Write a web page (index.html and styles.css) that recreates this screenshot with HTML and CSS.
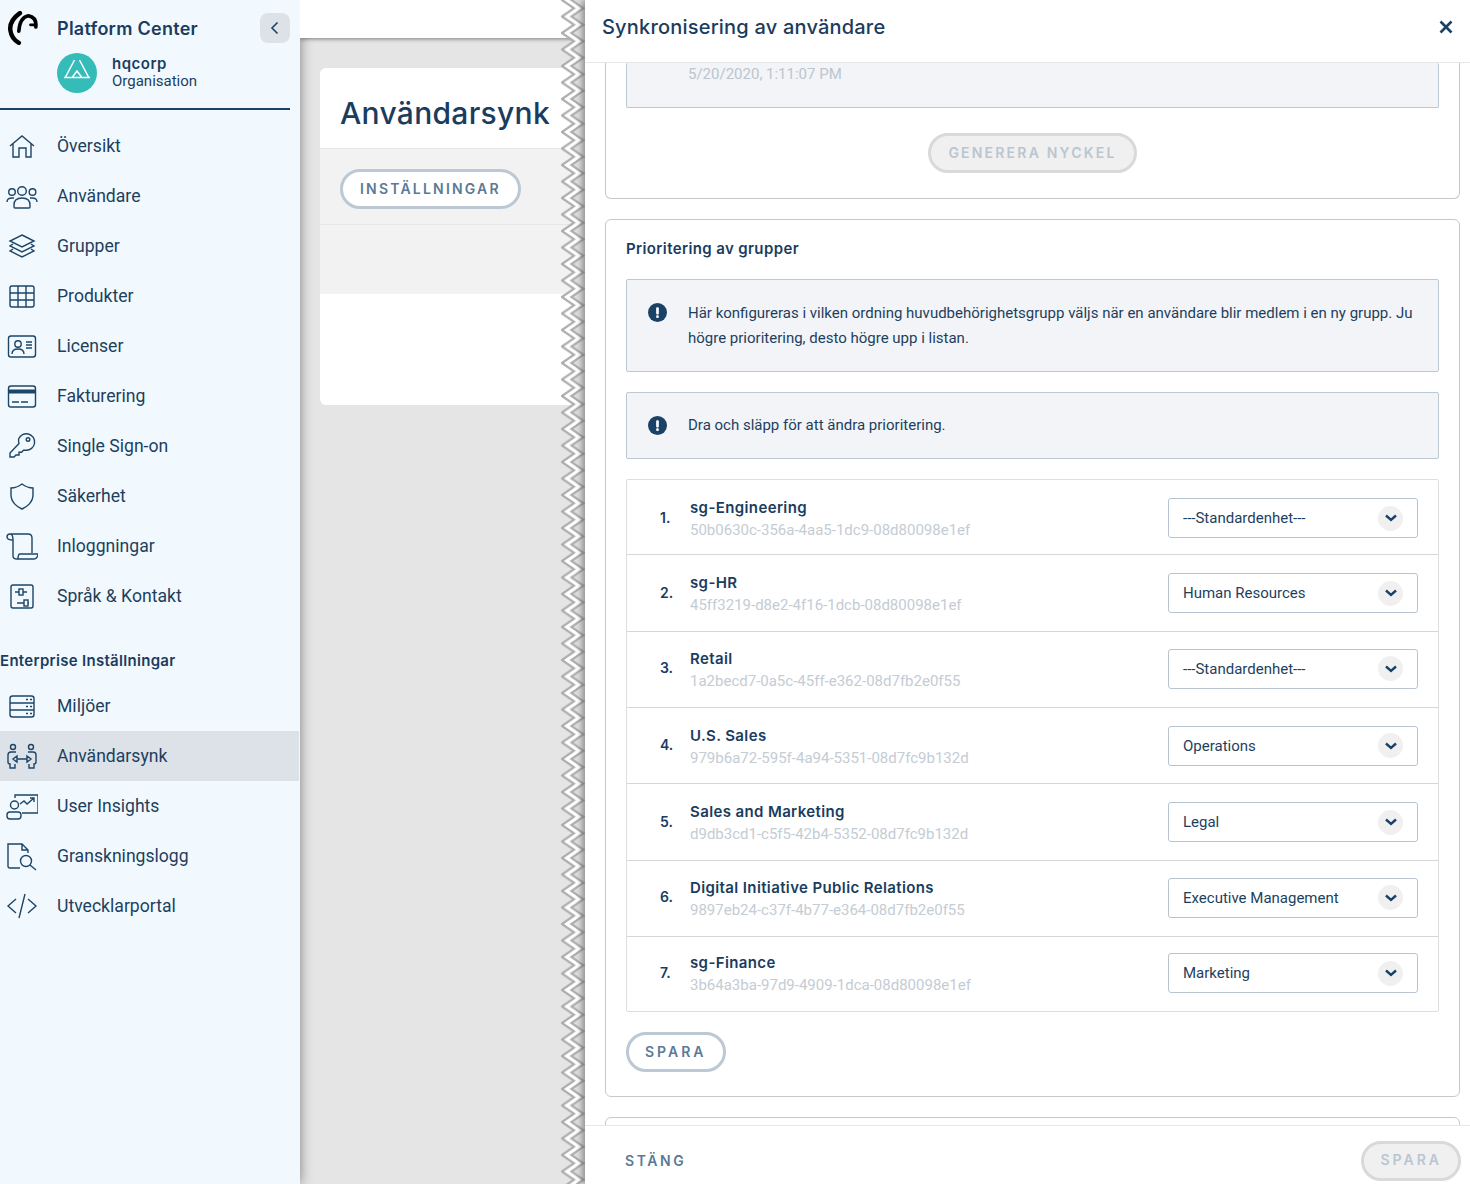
FILE: index.html
```html
<!DOCTYPE html>
<html lang="sv">
<head>
    <meta charset="UTF-8">
    <meta name="viewport" content="width=device-width, initial-scale=1.0">
    <title>Användarsynk</title>
    <link rel="stylesheet" href="styles.css">
</head>
<body>
    <!-- Sidebar -->
    <aside class="sidebar">
        <div class="brand">
            <svg class="logo" viewBox="0 0 30 32" fill="none" stroke="#000" stroke-linecap="round">
                <path d="M13 2 Q3 9 4 18 Q5 26 12 30" stroke-width="4.2"/>
                <path d="M12 19 Q13 6 21 4.5 Q29 6 28 15" stroke-width="3.4"/>
                <path d="M23 13 H28" stroke-width="2.6"/>
            </svg>
            <span class="brand-name">Platform Center</span>
            <button class="collapse">
                <svg viewBox="0 0 30 30" fill="none" stroke="#1d4567" stroke-width="1.6"><path d="M17.5 9.5 L12 15 L17.5 20.5"/></svg>
            </button>
        </div>
        <div class="org">
            <span class="avatar">
                <svg viewBox="0 0 40 40" fill="none" stroke="#fff" stroke-width="1.5">
                    <path d="M17.5 7 L8.5 24 M22.5 7 L31.5 24 M7 24.5 H33 M15.5 24 L20 18 L24.5 24"/>
                </svg>
            </span>
            <div class="org-text">
                <strong>hqcorp</strong>
                <span>Organisation</span>
            </div>
        </div>

        <nav class="nav">
            <a class="nav-item">
                <svg class="nav-icon" viewBox="0 0 32 32"><path d="M4 16 L16 6 L28 16 M7 14 V27 H13 V18 H20 V27 H25 V14"/></svg>
                Översikt
            </a>
            <a class="nav-item">
                <svg class="nav-icon" viewBox="0 0 32 32"><circle cx="6" cy="12" r="3.3"/><circle cx="16" cy="11" r="4.3"/><circle cx="26.5" cy="12" r="3.3"/><path d="M1 22 C1 19 3 18 6 18 H8 M31 22 C31 19 29 18 26 18 H24 M8 27 V25 C8 20 11 18 16 18 C21 18 24 20 24 25 V27 Q24 28 23 28 H9 Q8 28 8 27Z"/></svg>
                Användare
            </a>
            <a class="nav-item">
                <svg class="nav-icon" viewBox="0 0 32 32"><path d="M16 5 L28 11 L16 17 L4 11Z M7 14 L4 16 L16 22 L28 16 L25 14 M7 19 L4 21 L16 27 L28 21 L25 19"/></svg>
                Grupper
            </a>
            <a class="nav-item">
                <svg class="nav-icon" viewBox="0 0 32 32"><rect x="4" y="6" width="24" height="21" rx="2"/><path d="M12 6 V27 M20 6 V27 M4 13 H28 M4 20 H28"/></svg>
                Produkter
            </a>
            <a class="nav-item">
                <svg class="nav-icon" viewBox="0 0 32 32"><rect x="2.5" y="6" width="27" height="21" rx="2.5"/><circle cx="12" cy="14" r="3.2"/><path d="M6 24 C6 20 9 19 12 19 C15 19 18 20 18 24 M20 12 H26 M20 15 H26 M20 18 H26"/></svg>
                Licenser
            </a>
            <a class="nav-item">
                <svg class="nav-icon" viewBox="0 0 32 32"><rect x="2.5" y="6" width="27" height="21" rx="2.5"/><path class="thick" d="M2.5 11.5 H29.5"/><path d="M6 22 H13 M15 22 H22"/></svg>
                Fakturering
            </a>
            <a class="nav-item">
                <svg class="nav-icon" viewBox="0 0 32 32"><path d="M12.6 9 A8.3 8.3 0 1 1 20 20.3 L17.5 20.3 L15.5 22.3 H13 V25 H10 L8 27 H4 V23 L13 13.5 Q12.3 11 12.6 9Z"/><circle cx="22" cy="9.5" r="1.8"/></svg>
                Single Sign-on
            </a>
            <a class="nav-item">
                <svg class="nav-icon" viewBox="0 0 32 32"><path d="M16 4 C20 7 24 8 27 8 V15 C27 22 21 27 16 29 C11 27 5 22 5 15 V8 C8 8 12 7 16 4Z"/></svg>
                Säkerhet
            </a>
            <a class="nav-item">
                <svg class="nav-icon" viewBox="0 0 32 32"><path d="M4 4 H22 Q26 4 26 8 V23 M4 4 Q1 4 1 7 Q1 10 7 10 V26 Q7 29 11 29 H28 Q31 29 32 25 V24 H14 Q12 24 12 29 M4 4 Q7 4 7 10"/></svg>
                Inloggningar
            </a>
            <a class="nav-item">
                <svg class="nav-icon" viewBox="0 0 32 32"><rect x="5" y="5" width="22" height="23" rx="2"/><path d="M9 12 H13 M17 12 H21 M11 23 H18 M22 23 H23"/><rect x="13" y="9" width="4" height="6"/><rect x="18" y="20" width="4" height="6"/></svg>
                Språk &amp; Kontakt
            </a>
        </nav>

        <h3 class="nav-title">Enterprise Inställningar</h3>

        <nav class="nav">
            <a class="nav-item">
                <svg class="nav-icon" viewBox="0 0 32 32"><rect x="4" y="6" width="24" height="21" rx="2.5"/><path d="M4 13 H28 M4 20 H28 M20 9.5 H22 M24 9.5 H26 M20 16.5 H22 M24 16.5 H26 M20 23.5 H22 M24 23.5 H26"/></svg>
                Miljöer
            </a>
            <a class="nav-item active">
                <svg class="nav-icon" viewBox="0 0 32 32"><circle cx="7" cy="7" r="2.5"/><circle cx="25" cy="7" r="2.5"/><path d="M10 12 H5 Q2 12 2 15 V22 Q2 24 4 24 V28 H9 V24 M22 12 H27 Q30 12 30 15 V22 Q30 24 28 24 V28 H23 V24 M11 19 H21 M11 16 L7 19 L11 22Z M21 16 L25 19 L21 22Z"/></svg>
                Användarsynk
            </a>
            <a class="nav-item">
                <svg class="nav-icon" viewBox="0 0 32 32"><path d="M9 8 V5 H32 V23 H16 M14 14 L18 11 L21 14 L28 8 M24 8 H28 V12"/><circle cx="8.5" cy="15" r="4"/><rect x="1" y="22" width="14" height="7" rx="3"/></svg>
                User Insights
            </a>
            <a class="nav-item">
                <svg class="nav-icon" viewBox="0 0 32 32"><path d="M14 28 H4 Q2 28 2 26 V4 H16 L22 10 V13 M16 4 V10 H22"/><circle cx="20" cy="21" r="5.5"/><path d="M24 25 L30 30"/></svg>
                Granskningslogg
            </a>
            <a class="nav-item">
                <svg class="nav-icon" viewBox="0 0 32 32"><path d="M10 9 L2 16 L10 23 M22 9 L30 16 L22 23 M19 4 L13 28"/></svg>
                Utvecklarportal
            </a>
        </nav>
    </aside>

    <!-- Page behind the panel -->
    <main class="main">
        <div class="topbar"></div>
        <section class="page-card">
            <div class="page-head"><h1>Användarsynk</h1></div>
            <div class="page-tabs"><button class="btn">INSTÄLLNINGAR</button></div>
            <div class="page-gray"></div>
        </section>
        <svg class="zigzag" width="24" height="1184">
            <defs>
                <pattern id="zig" width="24" height="16.5" patternUnits="userSpaceOnUse">
                    <path d="M24 0 H10.5 L22.5 8.25 L10.5 16.5 H24Z" fill="#dedede"/>
                    <path d="M1 0 L13 8.25 L1 16.5 H10.5 L22.5 8.25 L10.5 0Z" fill="#fff"/>
                    <path d="M13 -8.25 L1 0 L13 8.25 L1 16.5 L13 24.75 M22.5 -8.25 L10.5 0 L22.5 8.25 L10.5 16.5 L22.5 24.75" fill="none" stroke="#aeaeae" stroke-width="2.2"/>
                </pattern>
            </defs>
            <rect width="24" height="1184" fill="url(#zig)"/>
        </svg>
    </main>

    <!-- Slide-in panel -->
    <section class="panel">
        <header class="panel-head">
            <h2>Synkronisering av användare</h2>
            <svg class="close" viewBox="0 0 14 14" fill="none" stroke="#1a4166" stroke-width="2.6"><path d="M1.5 1.5 L12.5 12.5 M12.5 1.5 L1.5 12.5"/></svg>
        </header>

        <div class="panel-body">
            <div class="card card-cut">
                <div class="alert alert-cut"><p class="faded">5/20/2020, 1:11:07 PM</p></div>
                <div class="center"><button class="btn btn-off">GENERERA NYCKEL</button></div>
            </div>

            <div class="card card-groups">
                <h3 class="card-title">Prioritering av grupper</h3>
                <div class="alert alert-top">
                    <svg class="info" viewBox="0 0 20 20"><circle cx="10" cy="10" r="10" fill="#1a4166"/><rect x="8.6" y="4.5" width="2.8" height="7.5" rx="1" fill="#fff"/><rect x="8.6" y="13" width="2.8" height="2.8" rx="1" fill="#fff"/></svg>
                    <p>Här konfigureras i vilken ordning huvudbehörighetsgrupp väljs när en användare blir medlem i en ny grupp. Ju högre prioritering, desto högre upp i listan.</p>
                </div>
                <div class="alert alert-mid">
                    <svg class="info" viewBox="0 0 20 20"><circle cx="10" cy="10" r="10" fill="#1a4166"/><rect x="8.6" y="4.5" width="2.8" height="7.5" rx="1" fill="#fff"/><rect x="8.6" y="13" width="2.8" height="2.8" rx="1" fill="#fff"/></svg>
                    <p>Dra och släpp för att ändra prioritering.</p>
                </div>

                <ol class="groups">
                    <li class="group">
                        <span class="num">1.</span>
                        <div class="group-text"><strong>sg-Engineering</strong><span>50b0630c-356a-4aa5-1dc9-08d80098e1ef</span></div>
                        <div class="select">---Standardenhet---<i class="chev"><svg viewBox="0 0 12 8" fill="none" stroke="#1a4166" stroke-width="2.4"><path d="M1 1.5 L6 6 L11 1.5"/></svg></i></div>
                    </li>
                    <li class="group">
                        <span class="num">2.</span>
                        <div class="group-text"><strong>sg-HR</strong><span>45ff3219-d8e2-4f16-1dcb-08d80098e1ef</span></div>
                        <div class="select">Human Resources<i class="chev"><svg viewBox="0 0 12 8" fill="none" stroke="#1a4166" stroke-width="2.4"><path d="M1 1.5 L6 6 L11 1.5"/></svg></i></div>
                    </li>
                    <li class="group">
                        <span class="num">3.</span>
                        <div class="group-text"><strong>Retail</strong><span>1a2becd7-0a5c-45ff-e362-08d7fb2e0f55</span></div>
                        <div class="select">---Standardenhet---<i class="chev"><svg viewBox="0 0 12 8" fill="none" stroke="#1a4166" stroke-width="2.4"><path d="M1 1.5 L6 6 L11 1.5"/></svg></i></div>
                    </li>
                    <li class="group">
                        <span class="num">4.</span>
                        <div class="group-text"><strong>U.S. Sales</strong><span>979b6a72-595f-4a94-5351-08d7fc9b132d</span></div>
                        <div class="select">Operations<i class="chev"><svg viewBox="0 0 12 8" fill="none" stroke="#1a4166" stroke-width="2.4"><path d="M1 1.5 L6 6 L11 1.5"/></svg></i></div>
                    </li>
                    <li class="group">
                        <span class="num">5.</span>
                        <div class="group-text"><strong>Sales and Marketing</strong><span>d9db3cd1-c5f5-42b4-5352-08d7fc9b132d</span></div>
                        <div class="select">Legal<i class="chev"><svg viewBox="0 0 12 8" fill="none" stroke="#1a4166" stroke-width="2.4"><path d="M1 1.5 L6 6 L11 1.5"/></svg></i></div>
                    </li>
                    <li class="group">
                        <span class="num">6.</span>
                        <div class="group-text"><strong>Digital Initiative Public Relations</strong><span>9897eb24-c37f-4b77-e364-08d7fb2e0f55</span></div>
                        <div class="select">Executive Management<i class="chev"><svg viewBox="0 0 12 8" fill="none" stroke="#1a4166" stroke-width="2.4"><path d="M1 1.5 L6 6 L11 1.5"/></svg></i></div>
                    </li>
                    <li class="group">
                        <span class="num">7.</span>
                        <div class="group-text"><strong>sg-Finance</strong><span>3b64a3ba-97d9-4909-1dca-08d80098e1ef</span></div>
                        <div class="select">Marketing<i class="chev"><svg viewBox="0 0 12 8" fill="none" stroke="#1a4166" stroke-width="2.4"><path d="M1 1.5 L6 6 L11 1.5"/></svg></i></div>
                    </li>
                </ol>

                <button class="btn btn-short btn-save">SPARA</button>
            </div>

            <div class="card card-next"></div>
        </div>

        <footer class="panel-foot">
            <span class="close-link">STÄNG</span>
            <button class="btn btn-short btn-off">SPARA</button>
        </footer>
    </section>
</body>
</html>
```

FILE: styles.css
```css
/* Global Reset */
* {
    margin: 0;
    padding: 0;
    box-sizing: border-box;
}

body {
    display: flex;
    height: 100vh;
    overflow: hidden;
    font-family: 'Roboto', sans-serif;
    color: #1d3f5e;
    background: #e5e5e5;
}

button {
    font-family: 'Inter', sans-serif;
}

/* Sidebar */
.sidebar {
    position: relative;
    z-index: 1;
    flex: 0 0 300px;
    background: #f2f9fe;
    box-shadow: 0 0 12px rgba(0, 0, 0, 0.45);
}

.brand {
    display: flex;
    align-items: center;
    height: 53px;
    padding: 3px 10px 0 6px;
}

.logo {
    width: 32px;
    height: 34px;
    margin-right: 19px;
}

.brand-name {
    flex: 1;
    font-family: 'Inter', sans-serif;
    font-size: 18px;
    font-weight: 600;
    letter-spacing: 0.27px;
    color: #1a3c5e;
}

.collapse {
    width: 30px;
    height: 30px;
    border: none;
    border-radius: 8px;
    background: #dde1e8;
}

.org {
    display: flex;
    align-items: flex-start;
    gap: 15px;
    width: 290px;
    height: 57px;
    padding-left: 57px;
    border-bottom: 2px solid #1a4166;
}

.avatar {
    flex: 0 0 40px;
    width: 40px;
    height: 40px;
    border-radius: 50%;
    background: #36bcb8;
}

.org-text {
    padding-top: 2px;
}

.org-text strong {
    display: block;
    font-family: 'Inter', sans-serif;
    font-size: 15px;
    font-weight: 600;
    letter-spacing: 0.5px;
    line-height: 18px;
    color: #1a3c5e;
}

.org-text span {
    display: block;
    font-size: 15px;
    line-height: 17px;
}

.nav {
    padding-top: 11px;
}

.nav-item {
    display: flex;
    align-items: center;
    gap: 19px;
    height: 50px;
    padding-left: 6px;
    font-size: 17.6px;
}

.nav-item.active {
    width: 299px;
    background: #dde1e8;
}

.nav-icon {
    flex: 0 0 32px;
    width: 32px;
    height: 32px;
    fill: none;
    stroke: #1d4567;
    stroke-width: 1.4;
}

.nav-icon .thick {
    stroke-width: 4;
}

.nav-title {
    height: 20px;
    margin-top: 30px;
    margin-bottom: 10px;
    font-family: 'Inter', sans-serif;
    font-size: 15px;
    font-weight: 600;
    letter-spacing: 0.3px;
    line-height: 20px;
    color: #1a3c5e;
}

.nav-title + .nav {
    padding-top: 0;
}

/* Page behind the panel */
.main {
    position: relative;
    flex: 0 0 285px;
    overflow: hidden;
    background: #e5e5e5;
}

.topbar {
    position: relative;
    z-index: 2;
    height: 38px;
    background: #fff;
    box-shadow: 0 1px 4px rgba(0, 0, 0, 0.45);
}

.page-card {
    width: 600px;
    margin: 30px 0 0 20px;
    padding-bottom: 111px;
    border-radius: 6px;
    background: #fff;
}

.page-head {
    height: 81px;
    padding-left: 20px;
    border-bottom: 1px solid #e6e6e6;
}

.page-head h1 {
    font-family: 'Inter', sans-serif;
    font-size: 30px;
    font-weight: 500;
    letter-spacing: 0.3px;
    line-height: 90px;
    color: #1a3c5e;
}

.page-tabs {
    height: 76px;
    padding: 20px;
    background: #f2f2f2;
    border-bottom: 1px solid #e6e6e6;
}

.page-gray {
    height: 69px;
    background: #f2f2f2;
}

.zigzag {
    position: absolute;
    top: 0;
    right: 0;
    z-index: 3;
}

/* Buttons */
.btn {
    height: 40px;
    padding: 0 17px 2px;
    border: 3px solid #bcc8d4;
    border-radius: 20px;
    background: #fff;
    font-size: 14px;
    font-weight: 600;
    letter-spacing: 2.2px;
    color: #5a7a96;
}

.btn-short {
    padding: 0 16px 2px;
    letter-spacing: 3px;
}

.btn-off {
    border-color: #d9d9d9;
    background: #f0f0f0;
    color: #b9c6d2;
}

.btn-save {
    margin-top: 20px;
}

/* Panel */
.panel {
    position: relative;
    z-index: 4;
    display: flex;
    flex: 1;
    flex-direction: column;
    background: #fff;
    box-shadow: -3px 0 6px rgba(0, 0, 0, 0.35);
}

.panel-head {
    display: flex;
    flex: 0 0 63px;
    align-items: center;
    justify-content: space-between;
    padding: 0 17px;
    padding-bottom: 8px;
    border-bottom: 1px solid #e6e6e6;
}

.panel-head h2 {
    font-family: 'Inter', sans-serif;
    font-size: 20px;
    font-weight: 500;
    letter-spacing: 0.2px;
    color: #1a3c5e;
}

.close {
    width: 14px;
    height: 14px;
}

.panel-body {
    flex: 1;
    overflow: hidden;
    padding: 0 10px 0 20px;
}

.card {
    margin-bottom: 20px;
    padding: 20px;
    border: 1px solid #c8c8c8;
    border-radius: 6px;
}

.card-cut {
    height: 136px;
    padding-top: 0;
    border-top: none;
    border-radius: 0 0 6px 6px;
}

.card-groups {
    padding-bottom: 24px;
}

.card-next {
    height: 30px;
}

.card-title {
    height: 39px;
    font-family: 'Inter', sans-serif;
    font-size: 15px;
    font-weight: 600;
    letter-spacing: 0.38px;
    line-height: 18px;
    color: #1a3c5e;
}

.alert {
    display: flex;
    align-items: flex-start;
    gap: 21px;
    padding: 21px;
    border: 1px solid #bcc8d4;
    border-radius: 2px;
    background: #f2f4f7;
    font-size: 15px;
    line-height: 25px;
}

.alert-cut {
    height: 45px;
    padding: 0 0 0 61px;
    border-top: none;
    line-height: 23px;
}

.alert-top {
    height: 93px;
    margin-bottom: 20px;
    padding-top: 21px;
    padding-right: 20px;
}

.alert-mid {
    height: 67px;
    margin-bottom: 20px;
    padding-top: 20px;
}

.alert-top .info {
    margin-top: 2px;
}

.info {
    flex: 0 0 19px;
    width: 19px;
    height: 19px;
    margin-top: 3px;
}

.faded {
    color: #bcc5cf;
}

.center {
    display: flex;
    justify-content: center;
    margin-top: 25px;
}

/* Group list */
.groups {
    list-style: none;
    border: 1px solid #dedede;
    border-radius: 2px;
}

.group {
    display: flex;
    align-items: center;
    height: 76px;
    padding: 0 20px 0 33px;
    border-bottom: 1px solid #d4d8dc;
}

.group:first-child {
    height: 75px;
    padding-top: 2px;
}

.group:nth-child(2),
.group:nth-child(5) {
    height: 77px;
}

.group:nth-child(3),
.group:nth-child(6) {
    padding-bottom: 2px;
}

.group:last-child {
    height: 74px;
    padding-bottom: 2px;
    border-bottom: none;
}

.num {
    flex: 0 0 30px;
    padding-bottom: 2px;
    font-family: 'Inter', sans-serif;
    font-size: 14px;
    font-weight: 600;
    color: #1a3c5e;
}

.group-text {
    flex: 1;
    padding-top: 2px;
}

.group-text strong {
    display: block;
    font-family: 'Inter', sans-serif;
    font-size: 15px;
    font-weight: 600;
    letter-spacing: 0.38px;
    line-height: 22px;
    color: #1a3c5e;
}

.group-text span {
    display: block;
    font-size: 15px;
    line-height: 22px;
    color: #c4ccd4;
}

.select {
    display: flex;
    flex: 0 0 250px;
    align-items: center;
    justify-content: space-between;
    height: 40px;
    padding: 0 14px 0 14px;
    border: 1px solid #b8c4d0;
    border-radius: 3px;
    font-size: 15px;
}

.chev {
    display: flex;
    align-items: center;
    justify-content: center;
    width: 25px;
    height: 25px;
    border-radius: 50%;
    background: #f0f0f0;
}

.chev svg {
    width: 12px;
    height: 8px;
}

/* Panel footer */
.panel-foot {
    display: flex;
    flex: 0 0 59px;
    align-items: center;
    justify-content: space-between;
    padding: 11px 9px 0 40px;
    border-top: 1px solid #e6e6e6;
    background: #fff;
}

.close-link {
    font-family: 'Inter', sans-serif;
    font-size: 14px;
    font-weight: 600;
    letter-spacing: 2.6px;
    color: #5a7a96;
}
```
